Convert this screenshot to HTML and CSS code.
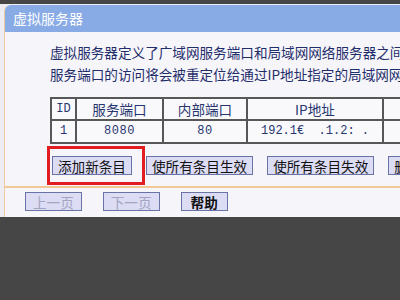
FILE: index.html
```html
<!DOCTYPE html>
<html lang="zh-CN">
<head>
  <meta charset="UTF-8" />
  <title>虚拟服务器</title>
  <link rel="stylesheet" href="styles.css">
</head>
<body>

  <div class="page">
    <div class="panel">
      <div class="panel-head">虚拟服务器</div>

      <div class="intro">
        <p>虚拟服务器定义了广域网服务端口和局域网网络服务器之间</p>
        <p>服务端口的访问将会被重定位给通过IP地址指定的局域网网</p>
      </div>

      <table class="rules">
        <tr>
          <th class="c-id">ID</th>
          <th class="c-port">服务端口</th>
          <th class="c-inner">内部端口</th>
          <th class="c-ip">IP地址</th>
          <th class="c-proto">协议</th>
        </tr>
        <tr>
          <td>1</td>
          <td class="num">8080</td>
          <td class="num">80</td>
          <td>192.1€&nbsp;&nbsp;.1.2:&nbsp;.</td>
          <td class="num">TCP</td>
        </tr>
      </table>

      <div class="actions">
        <button class="btn">添加新条目</button>
        <button class="btn">使所有条目生效</button>
        <button class="btn">使所有条目失效</button>
        <button class="btn">删除所有条目</button>
        <!-- 标注框 -->
        <span class="mark"></span>
      </div>

      <div class="pager">
        <button class="btn off">上一页</button>
        <button class="btn off">下一页</button>
        <button class="btn help">帮助</button>
      </div>
    </div>
  </div>

</body>
</html>
```

FILE: styles.css
```css
body {
  margin: 0;
  background-color: #464646;
  font-family: "Noto Sans CJK SC", "DejaVu Sans", sans-serif;
  overflow: hidden;
  width: 400px;
  height: 300px;
}

.page {
  margin-top: 4px;
  height: 213px;
  padding: 1px 0 0 4px;
  box-sizing: border-box;
  background-color: #eeedf3;
  overflow: hidden;
}

.panel {
  height: 212px;
  width: 600px;
  background-color: #f6f5fa;
  border-left: 1px solid #eccba0;
  border-top-left-radius: 6px;
  white-space: nowrap;
}

.panel-head {
  height: 27px;
  line-height: 27px;
  padding-left: 8px;
  background-color: #88abe6;
  border-top-left-radius: 6px;
  color: white;
  font-size: 14px;
}

.intro {
  padding: 9px 0 0 45px;
  color: #1f2d6b;
  font-size: 13.6px;
}

.intro p {
  margin: 0;
  height: 22px;
  line-height: 22px;
}

.rules {
  margin: 12px 0 0 45px;
  border-collapse: collapse;
  font-size: 13.6px;
  color: #27366f;
  background-color: #f9f9fc;
}

.rules th,
.rules td {
  border: 2px solid #575757;
  padding: 0;
  text-align: center;
  font-weight: normal;
}

.rules th {
  height: 20px;
  line-height: 20px;
}

.rules td {
  height: 21px;
  line-height: 21px;
  font-family: "Liberation Mono", monospace;
  font-size: 12px;
}

.rules td.num {
  letter-spacing: 0.5px;
}

.rules th.c-id {
  width: 23px;
  font-family: "Liberation Mono", monospace;
  font-size: 12px;
}

.c-port { width: 85px; }
.c-inner { width: 82px; }
.c-ip { width: 134px; }
.c-proto { width: 60px; text-align: left; }

.actions {
  position: relative;
  display: flex;
  gap: 14px;
  padding: 12px 0 0 47px;
  height: 30px;
  border-bottom: 2px solid #f2c895;
}

.btn {
  height: 19px;
  padding: 0 5px;
  border: 1px solid #6a73a6;
  background-color: #dcdcf5;
  color: #111;
  font-family: "Noto Sans CJK SC", sans-serif;
  font-size: 13.6px;
  line-height: 16px;
  cursor: pointer;
}

.mark {
  position: absolute;
  left: 42px;
  top: 2px;
  width: 92px;
  height: 33px;
  border: 3px solid #e11d22;
}

.pager {
  display: flex;
  gap: 21px;
  padding: 4px 0 0 20px;
}

.pager .btn {
  padding: 0 7px;
}

.btn.off {
  color: #a3a5c0;
}

.btn.help {
  padding: 0 9px;
  font-weight: bold;
}
```
